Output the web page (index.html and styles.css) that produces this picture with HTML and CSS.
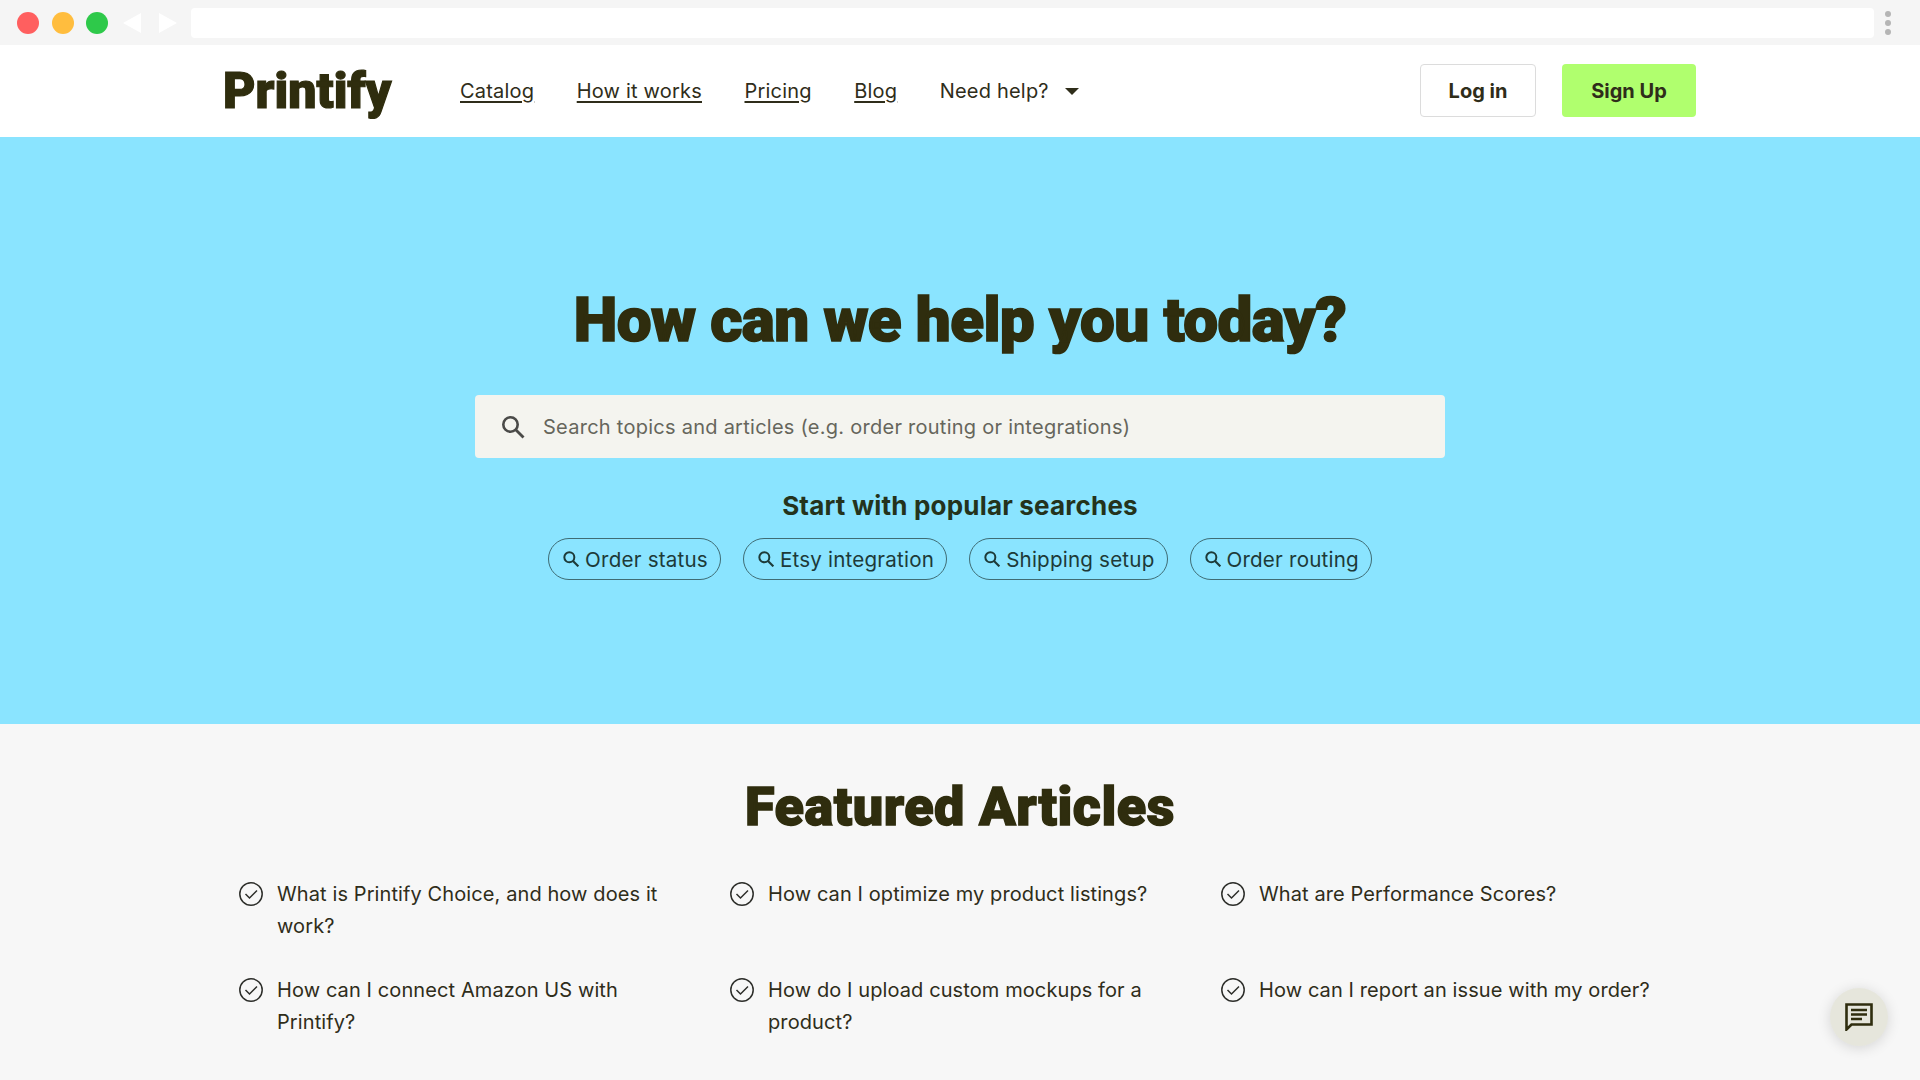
FILE: index.html
```html
<!DOCTYPE html>
<html lang="en">
<head>
  <meta charset="UTF-8">
  <title>Printify Help Center</title>
  <link rel="stylesheet" href="styles.css">
</head>
<body>
  <div class="browser-bar">
    <span class="dot dot-red"></span>
    <span class="dot dot-yellow"></span>
    <span class="dot dot-green"></span>
    <svg class="arrow arrow-back" width="18" height="20" viewBox="0 0 18 20"><path d="M18 0V20L0 10Z" fill="#fff"/></svg>
    <svg class="arrow arrow-next" width="18" height="20" viewBox="0 0 18 20"><path d="M0 0V20L18 10Z" fill="#fff"/></svg>
    <div class="address"></div>
    <div class="kebab"><i></i><i></i><i></i></div>
  </div>

  <header class="nav">
    <a class="logo">Printify</a>
    <nav class="nav-links">
      <a>Catalog</a>
      <a>How it works</a>
      <a>Pricing</a>
      <a>Blog</a>
      <span class="help">Need help? <span class="caret"></span></span>
    </nav>
    <div class="nav-actions">
      <a class="btn btn-login">Log in</a>
      <a class="btn btn-signup">Sign Up</a>
    </div>
  </header>

  <section class="hero">
    <h1>How can we help you today?</h1>
    <div class="search">
      <svg width="24" height="24" viewBox="0 0 24 24"><circle cx="9.5" cy="9.5" r="7.2" fill="none" stroke="#4a4a48" stroke-width="2.6"/><path d="M15 15l7.5 7.5" stroke="#4a4a48" stroke-width="2.8"/></svg>
      <span>Search topics and articles (e.g. order routing or integrations)</span>
    </div>
    <h2>Start with popular searches</h2>
    <div class="pills">
      <a class="pill"><svg width="16" height="16" viewBox="0 0 24 24"><circle cx="9.5" cy="9.5" r="7.500" fill="none" stroke="#1d3a38" stroke-width="3"/><path d="M15 15l8 8" stroke="#1d3a38" stroke-width="3.2"/></svg>Order status</a>
      <a class="pill"><svg width="16" height="16" viewBox="0 0 24 24"><circle cx="9.5" cy="9.5" r="7.500" fill="none" stroke="#1d3a38" stroke-width="3"/><path d="M15 15l8 8" stroke="#1d3a38" stroke-width="3.2"/></svg>Etsy integration</a>
      <a class="pill"><svg width="16" height="16" viewBox="0 0 24 24"><circle cx="9.5" cy="9.5" r="7.500" fill="none" stroke="#1d3a38" stroke-width="3"/><path d="M15 15l8 8" stroke="#1d3a38" stroke-width="3.2"/></svg>Shipping setup</a>
      <a class="pill"><svg width="16" height="16" viewBox="0 0 24 24"><circle cx="9.5" cy="9.5" r="7.500" fill="none" stroke="#1d3a38" stroke-width="3"/><path d="M15 15l8 8" stroke="#1d3a38" stroke-width="3.2"/></svg>Order routing</a>
    </div>
  </section>

  <section class="featured">
    <h2>Featured Articles</h2>
    <ul class="articles">
      <li><svg width="24" height="24" viewBox="0 0 24 24"><circle cx="12" cy="12" r="11.200" fill="none" stroke="#2d2e2a" stroke-width="1.5"/><path d="M6.5 12l4 4 7.500-7.500" fill="none" stroke="#2d2e2a" stroke-width="1.5"/></svg><a>What is Printify Choice, and how does it work?</a></li>
      <li><svg width="24" height="24" viewBox="0 0 24 24"><circle cx="12" cy="12" r="11.200" fill="none" stroke="#2d2e2a" stroke-width="1.5"/><path d="M6.5 12l4 4 7.500-7.500" fill="none" stroke="#2d2e2a" stroke-width="1.5"/></svg><a>How can I optimize my product listings?</a></li>
      <li><svg width="24" height="24" viewBox="0 0 24 24"><circle cx="12" cy="12" r="11.200" fill="none" stroke="#2d2e2a" stroke-width="1.5"/><path d="M6.5 12l4 4 7.500-7.500" fill="none" stroke="#2d2e2a" stroke-width="1.5"/></svg><a>What are Performance Scores?</a></li>
      <li><svg width="24" height="24" viewBox="0 0 24 24"><circle cx="12" cy="12" r="11.200" fill="none" stroke="#2d2e2a" stroke-width="1.5"/><path d="M6.5 12l4 4 7.500-7.500" fill="none" stroke="#2d2e2a" stroke-width="1.5"/></svg><a>How can I connect Amazon US with Printify?</a></li>
      <li><svg width="24" height="24" viewBox="0 0 24 24"><circle cx="12" cy="12" r="11.200" fill="none" stroke="#2d2e2a" stroke-width="1.5"/><path d="M6.5 12l4 4 7.500-7.500" fill="none" stroke="#2d2e2a" stroke-width="1.5"/></svg><a>How do I upload custom mockups for a product?</a></li>
      <li><svg width="24" height="24" viewBox="0 0 24 24"><circle cx="12" cy="12" r="11.200" fill="none" stroke="#2d2e2a" stroke-width="1.5"/><path d="M6.5 12l4 4 7.500-7.500" fill="none" stroke="#2d2e2a" stroke-width="1.5"/></svg><a>How can I report an issue with my order?</a></li>
    </ul>
  </section>

  <div class="chat">
    <svg width="28" height="28" viewBox="0 0 28 28"><path d="M1.5 1.5h25v20h-20l-5 5z" fill="none" stroke="#2f2d0e" stroke-width="2.6"/><path d="M6 7h16M6 11.500h16M6 16h11" stroke="#2f2d0e" stroke-width="2.4"/></svg>
  </div>
</body>
</html>
```

FILE: styles.css
```css
html, body {
  margin: 0;
  height: 1080px;
  overflow: hidden;
}
body {
  font-family: Inter, "Noto Sans", sans-serif;
  font-size: 20px;
  color: #2f2d1a;
  background: #f7f7f7;
}
a {
  color: inherit;
}

/* browser chrome */
.browser-bar {
  height: 45px;
  box-sizing: border-box;
  display: flex;
  align-items: center;
  padding: 0 29px 0 17px;
  background: #f5f5f5;
}
.dot {
  width: 22px;
  height: 22px;
  border-radius: 50%;
  margin-right: 12.5px;
}
.dot-red { background: #ff5f5f; }
.dot-yellow { background: #ffbd3e; }
.dot-green { background: #2ec94a; margin-right: 15px; }
.arrow-back { margin-right: 18px; }
.arrow-next { margin-right: 14px; }
.address {
  flex: 1;
  height: 30px;
  background: #fff;
  border-radius: 4px;
}
.kebab {
  margin-left: 11px;
  display: flex;
  flex-direction: column;
  gap: 3px;
}
.kebab i {
  width: 6px;
  height: 6px;
  border-radius: 50%;
  background: #b5b5b5;
}

/* nav */
.nav {
  height: 92px;
  box-sizing: border-box;
  display: flex;
  align-items: center;
  padding: 0 224px 1px 223px;
  background: #fff;
}
.logo {
  width: 237px;
  font-family: Roboto, sans-serif;
  font-weight: 900;
  font-size: 50px;
  -webkit-text-stroke: 1.2px #2f2d0e;
  color: #2f2d0e;
}
.nav-links {
  display: flex;
  align-items: center;
  gap: 42.5px;
  flex: 1;
  letter-spacing: 0.2px;
}
.nav-links a {
  text-decoration: underline;
  text-underline-offset: 3px;
}
.caret {
  display: inline-block;
  width: 0;
  height: 0;
  margin-left: 10px;
  vertical-align: 3px;
  border-left: 7px solid transparent;
  border-right: 7px solid transparent;
  border-top: 7px solid #2f2d1a;
}
.nav-actions {
  display: flex;
  gap: 26px;
}
.btn {
  height: 53px;
  box-sizing: border-box;
  display: flex;
  align-items: center;
  justify-content: center;
  border-radius: 4px;
  font-weight: 700;
}
.btn-login {
  width: 116px;
  border: 1.5px solid #dcdcdc;
  background: #fff;
}
.btn-signup {
  width: 134px;
  background: #b0ff6e;
}

/* hero */
.hero {
  height: 587px;
  box-sizing: border-box;
  padding-top: 152px;
  background: #8ae4ff;
  text-align: center;
}
.hero h1 {
  margin: 0;
  height: 62px;
  line-height: 62px;
  font-family: Roboto, sans-serif;
  font-weight: 900;
  font-size: 62px;
  letter-spacing: -0.6px;
  -webkit-text-stroke: 1.6px #2f2d0e;
  color: #2f2d0e;
}
.search {
  width: 970px;
  height: 63px;
  box-sizing: border-box;
  margin: 44px auto 0;
  padding-left: 26px;
  display: flex;
  align-items: center;
  gap: 18px;
  background: #f4f4ef;
  border-radius: 4px;
  color: #66665c;
  letter-spacing: 0.26px;
}
.hero h2 {
  margin: 32px 0 0;
  font-size: 26px;
  line-height: 32px;
  font-weight: 700;
  letter-spacing: 0.2px;
  color: #24331c;
}
.pills {
  display: flex;
  justify-content: center;
  gap: 22px;
  margin-top: 16px;
}
.pill {
  height: 42px;
  box-sizing: border-box;
  display: flex;
  align-items: center;
  gap: 6px;
  padding: 0 12px 0 14px;
  border: 1.5px solid #3f6c74;
  border-radius: 21px;
  font-size: 20.6px;
  letter-spacing: 0.2px;
  color: #1d3a38;
}

/* featured articles */
.featured {
  padding-top: 50px;
}
.featured h2 {
  margin: 0;
  height: 66px;
  line-height: 66px;
  text-align: center;
  font-family: Roboto, sans-serif;
  font-weight: 900;
  font-size: 54px;
  letter-spacing: 0.5px;
  -webkit-text-stroke: 1.4px #2f2d0e;
  color: #2f2d0e;
}
.articles {
  list-style: none;
  width: 1441px;
  margin: 38px 0 0 239px;
  padding: 0;
  display: grid;
  grid-template-columns: repeat(3, 1fr);
  gap: 32px;
  line-height: 32px;
  letter-spacing: 0.1px;
}
.articles li {
  display: flex;
  gap: 14px;
  padding-right: 20px;
}
.articles svg {
  flex: none;
  margin-top: 4px;
}

.chat {
  position: fixed;
  left: 1830px;
  top: 988px;
  width: 58px;
  height: 58px;
  display: flex;
  align-items: center;
  justify-content: center;
  border-radius: 50%;
  background: #e6e6dc;
  box-shadow: 0 2px 14px rgba(0,0,0,0.14);
}
```
